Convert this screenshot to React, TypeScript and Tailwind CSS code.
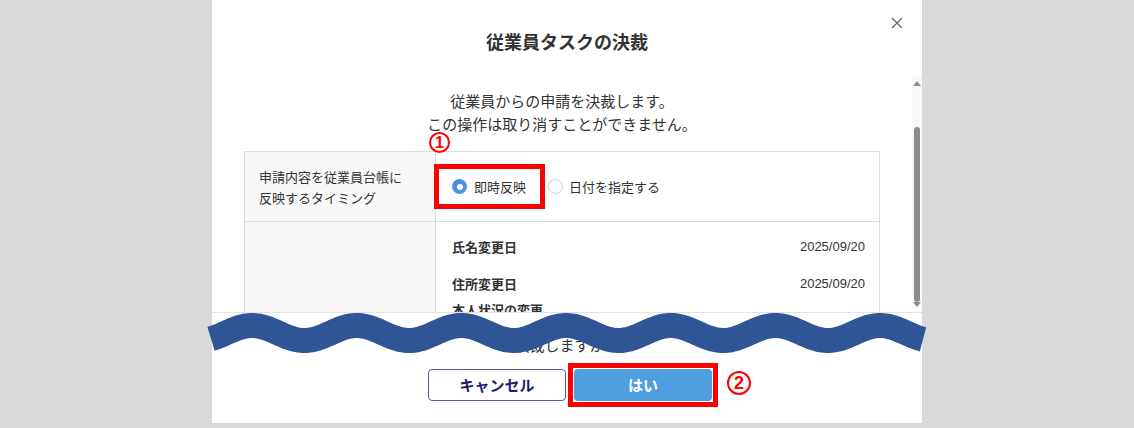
import React from "react";

const JP = '"Noto Sans CJK JP", "Noto Sans", sans-serif';
const AR = '"Liberation Sans", Arial, sans-serif';

function wavePath(): string {
  const pts: string[] = [];
  for (let x = 211; x <= 923; x += 2) {
    const y = 333 - 7.5 * Math.cos((2 * Math.PI * (x - 252)) / 104.7);
    pts.push(`${pts.length === 0 ? "M" : "L"}${x} ${y.toFixed(2)}`);
  }
  return pts.join(" ");
}

function Radio({ checked }: { checked?: boolean }) {
  if (checked) {
    return (
      <span className="w-[15px] h-[15px] rounded-full bg-[#4a90e2] flex items-center justify-center shrink-0">
        <span className="w-[6px] h-[6px] rounded-full bg-white" />
      </span>
    );
  }
  return <span className="w-[15px] h-[15px] rounded-full border border-[#c8c8c8] bg-white shrink-0" />;
}

export default function App() {
  return (
    <div
      className="relative w-[1134px] h-[428px] bg-[#d9d9d9] flex justify-center overflow-hidden"
      style={{ fontFamily: JP }}
    >
      <div className="w-[710px] h-[423px] bg-white flex flex-col">
        {/* header */}
        <div className="relative h-[75px] pt-[28px] flex justify-center">
          <h1 className="text-[18px] leading-[26px] font-bold text-[#333]">従業員タスクの決裁</h1>
          <button className="absolute right-[19px] top-[17px] w-[12px] h-[12px]">
            <svg width="12" height="12" viewBox="0 0 12 12">
              <path d="M1 1 L11 11 M11 1 L1 11" stroke="#666" strokeWidth="1.4" />
            </svg>
          </button>
        </div>

        {/* body */}
        <div className="h-[237px] flex">
          <div className="flex-1 overflow-hidden px-[32px]">
            <div className="pt-[14px] text-[15px] leading-[23px] text-center text-[#333]">
              <p>従業員からの申請を決裁します。</p>
              <p>この操作は取り消すことができません。</p>
            </div>
            <div className="mt-[16px] border border-[#dcdcdc] text-[13px] text-[#333]">
              <div className="grid grid-cols-[191px_1fr] h-[70px] border-b border-[#dcdcdc]">
                <div className="bg-[#f8f8f8] border-r border-[#dcdcdc] px-[14px] flex flex-col justify-center leading-[21px]">
                  <span>申請内容を従業員台帳に</span>
                  <span>反映するタイミング</span>
                </div>
                <div className="relative flex items-center pl-[16px]">
                  <div className="flex items-center gap-[7px]">
                    <Radio checked />
                    <span>即時反映</span>
                  </div>
                  <div className="flex items-center gap-[6px] ml-[22px]">
                    <Radio />
                    <span>日付を指定する</span>
                  </div>
                  <div className="absolute left-[-2px] top-[12px] w-[111px] h-[45px] border-[5px] border-[#ff0000]" />
                  <span
                    className="absolute left-[-7px] top-[-20px] w-[21px] h-[21px] rounded-full border-2 border-[#ff0000] bg-white flex items-center justify-center text-[16px] leading-none font-bold text-[#ff0000]"
                    style={{ fontFamily: AR }}
                  >
                    1
                  </span>
                </div>
              </div>
              <div className="grid grid-cols-[191px_1fr] h-[200px]">
                <div className="bg-[#f8f8f8] border-r border-[#dcdcdc]" />
                <div className="pt-[15px] pl-[16px] pr-[14px] flex flex-col gap-[17px]">
                  <div className="flex justify-between h-[20px] leading-[20px]">
                    <span className="font-bold">氏名変更日</span>
                    <span style={{ fontFamily: AR }}>2025/09/20</span>
                  </div>
                  <div className="flex justify-between h-[20px] leading-[20px]">
                    <span className="font-bold">住所変更日</span>
                    <span style={{ fontFamily: AR }}>2025/09/20</span>
                  </div>
                  <div className="flex justify-between h-[20px] leading-[20px] mt-[-11px]">
                    <span className="font-bold">本人状況の変更</span>
                  </div>
                </div>
              </div>
            </div>
          </div>
          {/* scrollbar */}
          <div className="w-[10px] bg-[#f9f9f9] flex flex-col items-center pt-[6px]">
            <span className="w-0 h-0 border-l-[4px] border-r-[4px] border-b-[5px] border-l-transparent border-r-transparent border-b-[#8c8c8c]" />
            <span className="mt-[41px] w-[6px] h-[175px] rounded-[3px] bg-[#8c8c8c]" />
            <span className="w-0 h-0 border-l-[4px] border-r-[4px] border-t-[5px] border-l-transparent border-r-transparent border-t-[#8c8c8c]" />
          </div>
        </div>

        {/* footer */}
        <div className="flex-1 border-t border-[#e3e3e3] flex flex-col items-center">
          <p className="pt-[20px] text-[15px] leading-[23px] text-[#333]">決裁しますか？</p>
          <div className="mt-[7px] flex items-center gap-[2px] pl-[12px]">
            <button className="w-[138px] h-[32px] rounded-[4px] border-[1.5px] border-[#5c5c98] bg-white text-[15px] font-bold text-[#1d1d6b]">
              キャンセル
            </button>
            <div className="relative border-[5px] border-[#ff0000] p-[1px]">
              <button className="w-[138px] h-[32px] rounded-[4px] bg-[#4f9fe0] text-[15px] font-bold text-white">
                はい
              </button>
              <span
                className="absolute left-[154px] top-[3px] w-[24px] h-[24px] rounded-full border-[2.5px] border-[#ff0000] flex items-center justify-center text-[18px] leading-none font-bold text-[#ff0000]"
                style={{ fontFamily: AR }}
              >
                2
              </span>
            </div>
          </div>
        </div>
      </div>

      <svg className="absolute left-0 top-0 pointer-events-none" width="1134" height="428" viewBox="0 0 1134 428">
        <path d={wavePath()} fill="none" stroke="#2f5597" strokeWidth="25" strokeLinecap="butt" />
      </svg>
    </div>
  );
}
